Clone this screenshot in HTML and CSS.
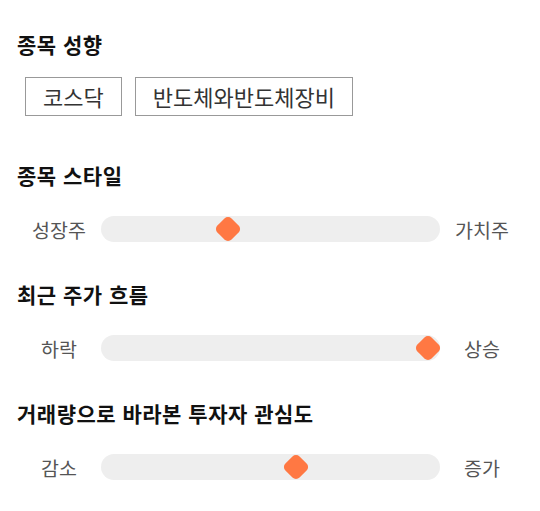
FILE: index.html
```html
<!DOCTYPE html>
<html lang="ko">
<head>
    <meta charset="UTF-8">
    <meta name="viewport" content="width=device-width, initial-scale=1.0">
    <title>종목 분석</title>
    <link rel="stylesheet" href="styles.css">
</head>
<body>
    <div class="section section-chips">
        <h2>종목 성향</h2>
        <div class="chips">
            <span class="chip">코스닥</span>
            <span class="chip">반도체와반도체장비</span>
        </div>
    </div>

    <div class="section">
        <h2>종목 스타일</h2>
        <div class="slider-row">
            <span class="slider-label">성장주</span>
            <div class="track">
                <div class="rail"><span class="thumb" style="left: 36.5%;"></span></div>
            </div>
            <span class="slider-label">가치주</span>
        </div>
    </div>

    <div class="section">
        <h2>최근 주가 흐름</h2>
        <div class="slider-row">
            <span class="slider-label">하락</span>
            <div class="track">
                <div class="rail"><span class="thumb" style="left: 100%;"></span></div>
            </div>
            <span class="slider-label">상승</span>
        </div>
    </div>

    <div class="section">
        <h2>거래량으로 바라본 투자자 관심도</h2>
        <div class="slider-row">
            <span class="slider-label">감소</span>
            <div class="track">
                <div class="rail"><span class="thumb" style="left: 58%;"></span></div>
            </div>
            <span class="slider-label">증가</span>
        </div>
    </div>
</body>
</html>
```

FILE: styles.css
```css
* {
    margin: 0;
    padding: 0;
    box-sizing: border-box;
    font-family: 'Noto Sans CJK KR', 'Noto Sans', sans-serif;
}

body {
    background-color: #fff;
    padding: 31px 16px 0 17px;
}

.section {
    margin-bottom: 39px;
}

.section-chips {
    margin-bottom: 46px;
}

.section h2 {
    font-size: 21px;
    line-height: 26px;
    font-weight: 700;
    letter-spacing: 0.5px;
    color: #111;
    margin-bottom: 28px;
}

.section-chips h2 {
    margin-bottom: 20px;
}

.chips {
    display: flex;
    gap: 13px;
    padding-left: 8px;
}

.chip {
    border: 1px solid #999;
    padding: 5px 17px;
    font-size: 22px;
    line-height: 27px;
    color: #333;
}

.slider-row {
    display: flex;
    align-items: center;
    height: 26px;
}

.slider-label {
    width: 84px;
    text-align: center;
    font-size: 19.5px;
    color: #555;
}

.track {
    flex: 1;
    height: 26px;
    border-radius: 13px;
    background-color: #eeeeee;
    position: relative;
}

/* inset so the thumb stays inside the track ends */
.rail {
    position: absolute;
    top: 0;
    bottom: 0;
    left: 12px;
    right: 12px;
}

.thumb {
    position: absolute;
    top: 3px;
    width: 20px;
    height: 20px;
    margin-left: -10px;
    border-radius: 5px;
    background-color: #ff7843;
    transform: rotate(45deg);
}
```
